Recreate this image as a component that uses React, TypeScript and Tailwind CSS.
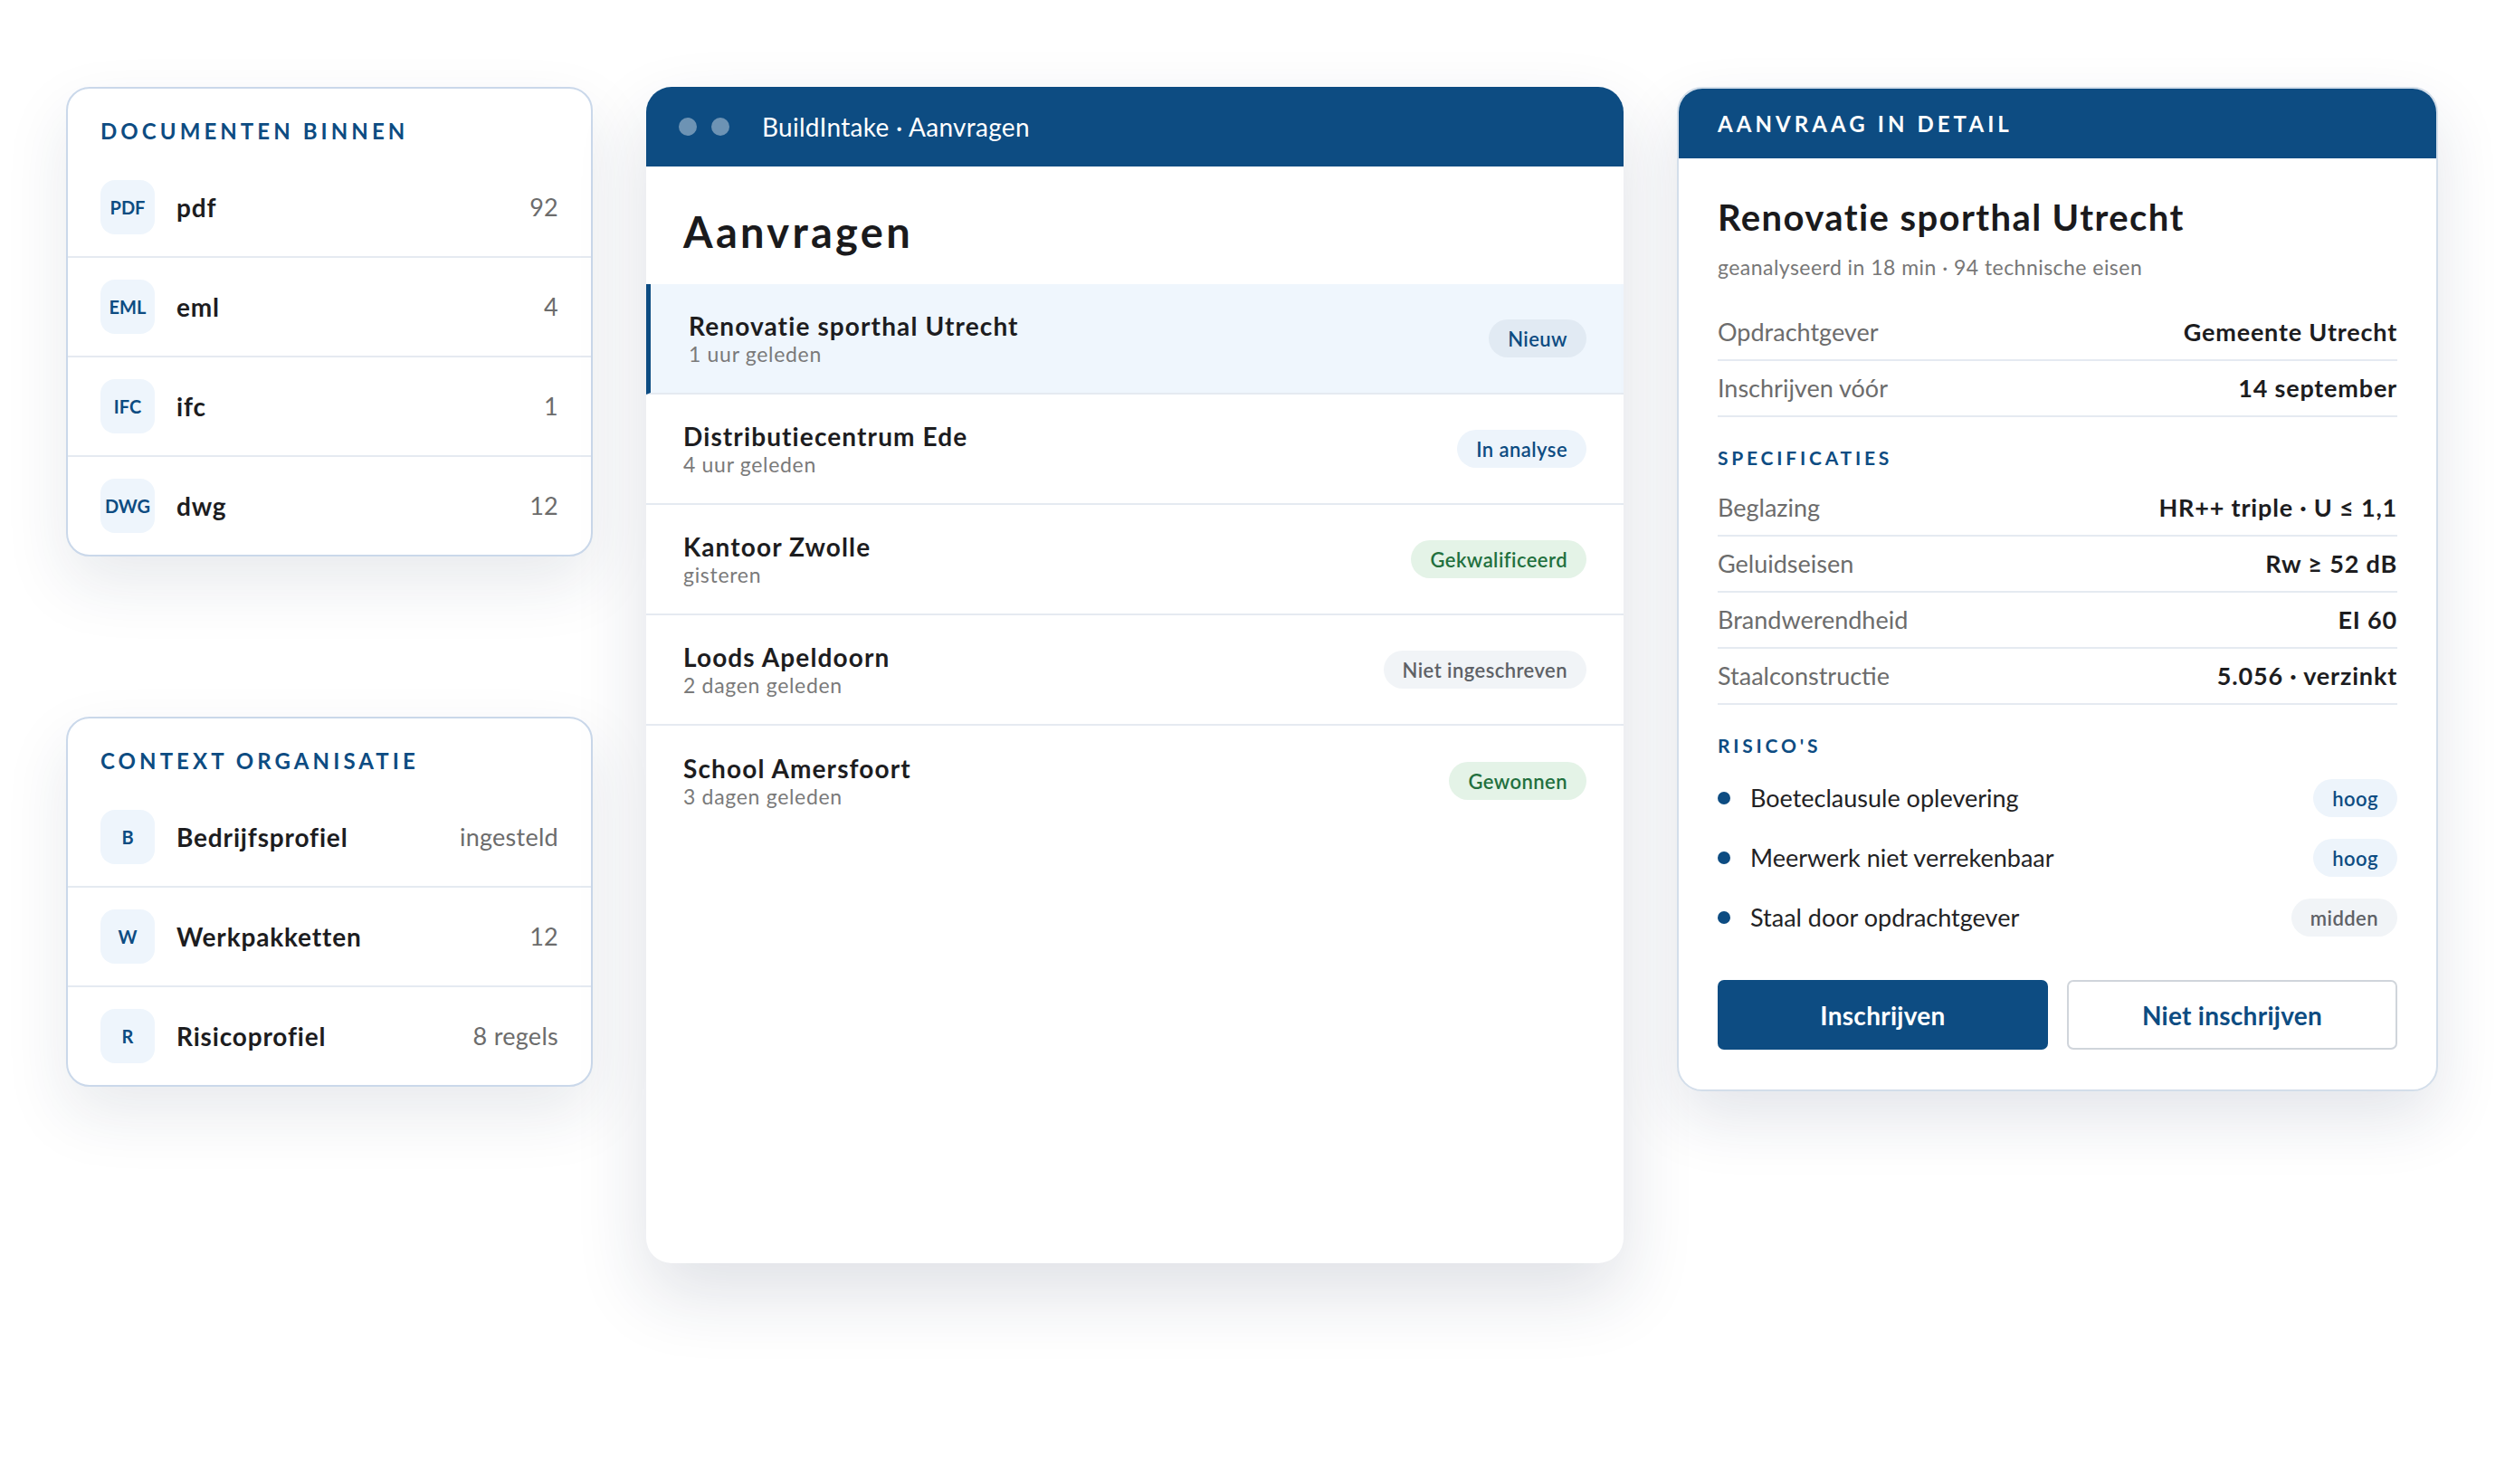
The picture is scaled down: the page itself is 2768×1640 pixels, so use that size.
import type { ReactNode } from "react";

type Tone = "navy" | "soft" | "green" | "gray";

const badgeTone: Record<Tone, string> = {
  navy: "bg-[#e1eaf3] text-[#0d4c82]",
  soft: "bg-[#edf4fb] text-[#0d4c82]",
  green: "bg-[#e4f3e7] text-[#22703e]",
  gray: "bg-[#f1f4f7] text-[#5e6166]",
};

function Badge({ tone, children }: { tone: Tone; children: ReactNode }) {
  return (
    <span
      className={`inline-flex h-[42px] items-center rounded-full px-[21px] text-[22px] font-semibold tracking-[0.02em] ${badgeTone[tone]}`}
    >
      {children}
    </span>
  );
}

interface SideRow {
  tag: string;
  name: string;
  value: string;
}

function SideCard({ title, rows }: { title: string; rows: SideRow[] }) {
  return (
    <section className="overflow-hidden rounded-[26px] border-2 border-[#cad8ea] bg-white shadow-[0_30px_70px_rgba(25,45,80,0.10)]">
      <h2 className="px-[36px] pt-[32px] pb-[15px] text-[24px] leading-[30px] font-bold tracking-[0.17em] text-[#0d4c82]">
        {title}
      </h2>
      <ul>
        {rows.map((row) => (
          <li
            key={row.name}
            className="flex h-[110px] items-center border-b-2 border-[#e5eaf1] px-[36px] last:h-[108px] last:border-b-0"
          >
            <span className="flex h-[60px] w-[60px] items-center justify-center rounded-[16px] bg-[#eef5fc] text-[20px] font-bold text-[#0d4c82]">
              {row.tag}
            </span>
            <span className="ml-[24px] flex-1 text-[28px] font-bold tracking-[0.03em] text-[#1d1d1f]">{row.name}</span>
            <span className="text-[27px] tracking-[0.01em] text-[#6c6c6c]">{row.value}</span>
          </li>
        ))}
      </ul>
    </section>
  );
}

interface Request {
  title: string;
  when: string;
  status: string;
  tone: Tone;
}

const requests: Request[] = [
  { title: "Renovatie sporthal Utrecht", when: "1 uur geleden", status: "Nieuw", tone: "navy" },
  { title: "Distributiecentrum Ede", when: "4 uur geleden", status: "In analyse", tone: "soft" },
  { title: "Kantoor Zwolle", when: "gisteren", status: "Gekwalificeerd", tone: "green" },
  { title: "Loods Apeldoorn", when: "2 dagen geleden", status: "Niet ingeschreven", tone: "gray" },
  { title: "School Amersfoort", when: "3 dagen geleden", status: "Gewonnen", tone: "green" },
];

function RequestsPanel() {
  return (
    <section className="flex h-[1300px] flex-col overflow-hidden rounded-[28px] bg-white shadow-[0_34px_80px_rgba(25,45,80,0.14)]">
      <header className="flex h-[88px] items-center bg-[#0d4c82] pl-[36px]">
        <span className="h-[20px] w-[20px] rounded-full bg-white/40" />
        <span className="ml-[16px] h-[20px] w-[20px] rounded-full bg-white/40" />
        <span className="ml-[36px] text-[28px] tracking-[0.01em] text-white">BuildIntake · Aanvragen</span>
      </header>
      <h1 className="px-[41px] pt-[44px] pb-[30px] text-[47px] leading-[56px] font-bold tracking-[0.07em] text-[#1a1a1c]">
        Aanvragen
      </h1>
      <ul>
        {requests.map((r, i) => (
          <li
            key={r.title}
            className={
              i === 0
                ? "flex h-[122px] items-center border-b-2 border-l-[5px] border-b-[#e5eaf1] border-l-[#0d4c82] bg-[#eff6fd] pr-[41px] pl-[42px]"
                : "flex h-[122px] items-center border-b-2 border-[#e5eaf1] pr-[41px] pl-[41px] last:border-b-0"
            }
          >
            <div className="flex-1">
              <div className="text-[28px] leading-[34px] font-bold tracking-[0.04em] text-[#1d1d1f]">{r.title}</div>
              <div className="text-[23px] leading-[28px] tracking-[0.03em] text-[#7a7a7a]">{r.when}</div>
            </div>
            <Badge tone={r.tone}>{r.status}</Badge>
          </li>
        ))}
      </ul>
    </section>
  );
}

function KeyValue({ label, value }: { label: string; value: string }) {
  return (
    <div className="flex h-[62px] items-center justify-between border-b-2 border-[#e5eaf1]">
      <span className="text-[27px] text-[#6c6c6c]">{label}</span>
      <span className="text-[27px] font-bold tracking-[0.03em] text-[#1d1d1f]">{value}</span>
    </div>
  );
}

function SectionLabel({ children }: { children: ReactNode }) {
  return (
    <h3 className="mt-[31px] mb-[11px] text-[21px] leading-[28px] font-bold tracking-[0.18em] text-[#0d4c82]">
      {children}
    </h3>
  );
}

const risks: { text: string; level: string; tone: Tone }[] = [
  { text: "Boeteclausule oplevering", level: "hoog", tone: "soft" },
  { text: "Meerwerk niet verrekenbaar", level: "hoog", tone: "soft" },
  { text: "Staal door opdrachtgever", level: "midden", tone: "gray" },
];

function DetailPanel() {
  return (
    <section className="overflow-hidden rounded-[28px] border-2 border-[#d3deea] bg-white shadow-[0_30px_70px_rgba(25,45,80,0.12)]">
      <header className="flex h-[77px] items-center bg-[#0d4c82] px-[43px]">
        <span className="text-[24px] font-bold tracking-[0.17em] text-white">AANVRAAG IN DETAIL</span>
      </header>
      <div className="px-[43px] pt-[42px] pb-[44px]">
        <h2 className="text-[40px] leading-[46px] font-bold tracking-[0.035em] text-[#1a1a1c]">
          Renovatie sporthal Utrecht
        </h2>
        <p className="mt-[17px] text-[23px] leading-[30px] tracking-[0.02em] text-[#777777]">
          geanalyseerd in 18 min · 94 technische eisen
        </p>
        <div className="mt-[27px]">
          <KeyValue label="Opdrachtgever" value="Gemeente Utrecht" />
          <KeyValue label="Inschrijven vóór" value="14 september" />
        </div>
        <SectionLabel>SPECIFICATIES</SectionLabel>
        <KeyValue label="Beglazing" value="HR++ triple · U ≤ 1,1" />
        <KeyValue label="Geluidseisen" value="Rw ≥ 52 dB" />
        <KeyValue label="Brandwerendheid" value="EI 60" />
        <KeyValue label="Staalconstructie" value="5.056 · verzinkt" />
        <SectionLabel>RISICO'S</SectionLabel>
        <ul>
          {risks.map((r) => (
            <li key={r.text} className="flex h-[66px] items-center">
              <span className="h-[14px] w-[14px] rounded-full bg-[#0d4c82]" />
              <span className="ml-[22px] flex-1 text-[27px] text-[#222224]">{r.text}</span>
              <Badge tone={r.tone}>{r.level}</Badge>
            </li>
          ))}
        </ul>
        <div className="mt-[36px] grid grid-cols-2 gap-[21px]">
          <button className="h-[77px] rounded-[7px] bg-[#0d4c82] text-[28px] font-bold tracking-[0.01em] text-white">
            Inschrijven
          </button>
          <button className="h-[77px] rounded-[7px] border-2 border-[#d0d5db] bg-white text-[28px] font-bold tracking-[0.01em] text-[#0d4c82]">
            Niet inschrijven
          </button>
        </div>
      </div>
    </section>
  );
}

export default function App() {
  return (
    <div className="min-h-[1640px] w-full bg-white font-['Lato','Noto_Sans',sans-serif]">
      <div className="grid grid-cols-[582px_1080px_841px] items-start gap-x-[59px] pt-[96px] pl-[73px]">
        <div className="flex flex-col gap-[177px]">
          <SideCard
            title="DOCUMENTEN BINNEN"
            rows={[
              { tag: "PDF", name: "pdf", value: "92" },
              { tag: "EML", name: "eml", value: "4" },
              { tag: "IFC", name: "ifc", value: "1" },
              { tag: "DWG", name: "dwg", value: "12" },
            ]}
          />
          <SideCard
            title="CONTEXT ORGANISATIE"
            rows={[
              { tag: "B", name: "Bedrijfsprofiel", value: "ingesteld" },
              { tag: "W", name: "Werkpakketten", value: "12" },
              { tag: "R", name: "Risicoprofiel", value: "8 regels" },
            ]}
          />
        </div>
        <RequestsPanel />
        <DetailPanel />
      </div>
    </div>
  );
}
